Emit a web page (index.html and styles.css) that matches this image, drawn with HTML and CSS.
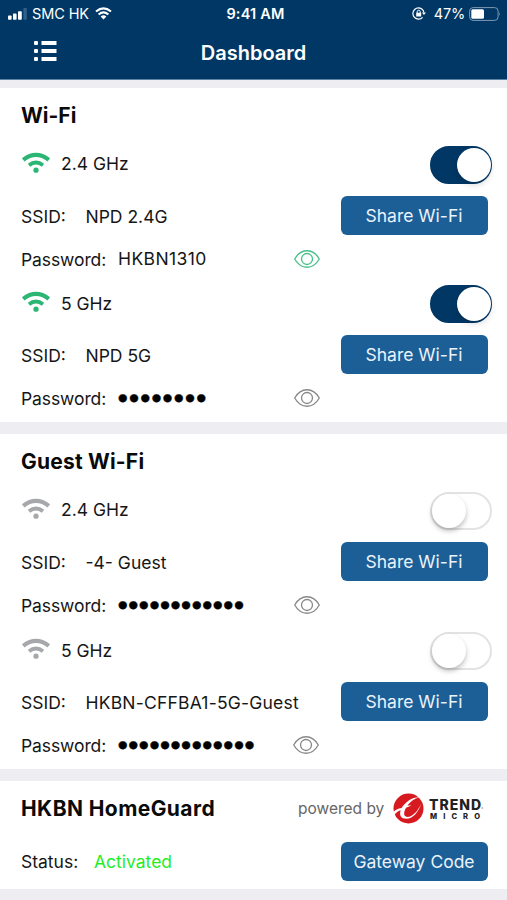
FILE: index.html
```html
<!DOCTYPE html>
<html lang="en">
<head>
<meta charset="utf-8">
<title>Dashboard</title>
<link rel="stylesheet" href="styles.css">
</head>
<body>
<svg class="defs" width="0" height="0" aria-hidden="true">
  <symbol id="wifi" viewBox="0 0 30 22">
    <path d="M2.2 7.8Q15 -2 27.8 7.8" fill="none" stroke="currentColor" stroke-width="4.2"/>
    <path d="M8 13.3Q15 7.6 22 13.3" fill="none" stroke="currentColor" stroke-width="3.8"/>
    <circle cx="15" cy="18.2" r="2.6" fill="currentColor"/>
  </symbol>
  <symbol id="eye" viewBox="0 0 26 18">
    <path d="M.7 9C7 -2 19 -2 25.3 9C19 20 7 20 .7 9Z" fill="none" stroke="currentColor" stroke-width="1.3"/>
    <circle cx="13" cy="9" r="5.5" fill="none" stroke="currentColor" stroke-width="1.3"/>
  </symbol>
</svg>

<header class="header">
  <div class="status">
    <div class="status-left">
      <svg class="signal" width="19" height="12" viewBox="0 0 19 12"><rect x="0" y="7.5" width="3.6" height="4.2" rx=".8" fill="#fff"/><rect x="5" y="5.6" width="3.6" height="6.1" rx=".8" fill="#fff"/><rect x="10" y="3.2" width="3.8" height="8.5" rx=".8" fill="#fff"/><rect x="15.4" y="0" width="3.4" height="11.7" rx=".8" fill="#33608a"/></svg>
      <span class="carrier">SMC HK</span>
      <svg class="status-wifi" width="17" height="13" viewBox="0 0 17 13"><path d="M1 4.6Q8.500 -1.800 16 4.600M3.600 7.500Q8.500 3.300 13.400 7.500" fill="none" stroke="#fff" stroke-width="2"/><path d="M5.600 9.400Q8.500 7.200 11.400 9.400L8.500 12.500Z" fill="#fff"/></svg>
    </div>
    <span class="clock">9:41 AM</span>
    <div class="status-right">
      <svg width="14" height="13" viewBox="0 0 14 13"><path d="M10.600 2.700A5.600 5.600 0 1 0 10.600 10.300M10.600 2.700A5.600 5.600 0 0 1 11.800 5.500" fill="none" stroke="#fff" stroke-width="1.200"/><path d="M9.900 5.400H14L11.900 8Z" fill="#fff"/><rect x="4.200" y="5.700" width="5" height="3.800" fill="#fff"/><path d="M5.200 6V4.700a1.500 1.500 0 0 1 3 0V6" fill="none" stroke="#fff"/></svg>
      <span class="percent">47%</span>
      <svg width="32" height="14" viewBox="0 0 32 14"><rect x=".6" y=".6" width="28.500" height="12.800" rx="3.500" fill="none" stroke="#7f9ab3"/><rect x="2.300" y="2.300" width="12.700" height="9.400" rx="1.500" fill="#fff"/><path d="M30.300 4.800q1.400 2.200 0 4.400Z" fill="#7f9ab3"/></svg>
    </div>
  </div>
  <div class="navbar">
    <svg class="menu" width="23" height="20" viewBox="0 0 23 20" fill="#fff"><rect x="0" y="0" width="4" height="4" rx="1"/><rect x="0" y="8" width="4" height="4" rx="1"/><rect x="0" y="16" width="4" height="4" rx="1"/><rect x="7.500" y="0" width="15" height="4"/><rect x="7.500" y="8" width="15" height="4"/><rect x="7.500" y="16" width="15" height="4"/></svg>
    <h1 class="page-title">Dashboard</h1>
  </div>
</header>

<main class="content">
  <section class="card">
    <h2 class="card-title">Wi-Fi</h2>
    <div class="band">
      <div class="band-row"><svg class="wifi on"><use href="#wifi"/></svg><span class="freq freq-first">2.4 GHz</span><span class="toggle is-on"></span></div>
      <div class="ssid-row"><span class="label">SSID:</span><span class="value">NPD 2.4G</span><button class="button">Share Wi-Fi</button></div>
      <div class="pass-row"><span class="pass-label">Password:</span><span class="pass">HKBN1310</span><svg class="eye on"><use href="#eye"/></svg></div>
    </div>
    <div class="band">
      <div class="band-row"><svg class="wifi on"><use href="#wifi"/></svg><span class="freq">5 GHz</span><span class="toggle is-on"></span></div>
      <div class="ssid-row"><span class="label">SSID:</span><span class="value">NPD 5G</span><button class="button">Share Wi-Fi</button></div>
      <div class="pass-row"><span class="pass-label">Password:</span><span class="dots dots-wide">●●●●●●●●</span><svg class="eye"><use href="#eye"/></svg></div>
    </div>
  </section>

  <section class="card guest">
    <h2 class="card-title guest-title">Guest Wi-Fi</h2>
    <div class="band">
      <div class="band-row"><svg class="wifi"><use href="#wifi"/></svg><span class="freq freq-first">2.4 GHz</span><span class="toggle"></span></div>
      <div class="ssid-row"><span class="label">SSID:</span><span class="value">-4- Guest</span><button class="button">Share Wi-Fi</button></div>
      <div class="pass-row"><span class="pass-label">Password:</span><span class="dots">●●●●●●●●●●●●</span><svg class="eye"><use href="#eye"/></svg></div>
    </div>
    <div class="band">
      <div class="band-row"><svg class="wifi"><use href="#wifi"/></svg><span class="freq">5 GHz</span><span class="toggle"></span></div>
      <div class="ssid-row"><span class="label">SSID:</span><span class="value value-long">HKBN-CFFBA1-5G-Guest</span><button class="button">Share Wi-Fi</button></div>
      <div class="pass-row"><span class="pass-label">Password:</span><span class="dots">●●●●●●●●●●●●●</span><svg class="eye eye-last"><use href="#eye"/></svg></div>
    </div>
  </section>

  <section class="card guard">
    <div class="guard-head">
      <h2 class="guard-title">HKBN HomeGuard</h2>
      <span class="powered">powered by</span>
      <svg class="trend-mark" width="31" height="31" viewBox="0 0 31 31"><circle cx="15.500" cy="15.500" r="15" fill="#d71920"/><path d="M0 19.500C2 17 5 15.500 8.500 15C13 8.500 19 3.800 27 4.200C21 5.500 17 8.800 14.500 12.600L18.500 12.600L13 14.800C10.500 19.500 10.500 23 13.500 23.800C18 24.800 24.500 19.500 28.200 10.500C26 18.500 20 25.800 13.500 25.800C8 25.800 6 22.300 7.700 17.300C5 18 2.500 20 1 22.500Z" fill="#fff"/></svg>
      <svg class="trend" width="58" height="27" viewBox="0 0 58 27"><text class="trend-top" x="0" y="14.500" textLength="52" lengthAdjust="spacing">TREND</text><text class="trend-sub" x="1" y="23.500" textLength="50">MICRO</text><rect x="52.500" y="12.500" width="1.500" height="1" fill="#777"/></svg>
    </div>
    <div class="guard-row"><span class="status-label">Status:</span><span class="activated">Activated</span><button class="button gateway">Gateway Code</button></div>
  </section>
</main>
</body>
</html>
```
FILE: styles.css
```css
* { box-sizing: border-box; }
body {
  margin: 0;
  width: 507px;
  height: 900px;
  overflow: hidden;
  background: #eeeef2;
  color: #161616;
  font-family: Inter, "Liberation Sans", sans-serif;
  font-size: 17.5px;
  line-height: 22px;
  white-space: nowrap;
}
h1, h2 { margin: 0; }
svg { display: block; flex: none; }
.defs { position: absolute; }

.header { height: 80px; background: #003764; color: #fff; border-bottom: 1px solid #5c83a6; }
.status { display: grid; grid-template-columns: 1fr auto 1fr; align-items: center; height: 27px; padding: 0 6px 0 8px; font-size: 14.5px; line-height: 18px; }
.status-left, .status-right { display: flex; align-items: center; }
.status-right { justify-content: flex-end; }
.carrier { width: 58px; margin-left: 5px; letter-spacing: -.1px; }
.status-wifi { margin-left: 5px; }
.clock { padding-left: 2px; font-weight: 600; letter-spacing: .2px; }
.percent { margin: 0 4px 0 8px; letter-spacing: -.2px; }
.navbar { display: grid; grid-template-columns: 1fr auto 1fr; align-items: center; height: 50px; }
.menu { margin-left: 34px; margin-bottom: 2px; }
.page-title { padding-top: 1px; font-size: 20px; line-height: 24px; font-weight: 600; }

.content { display: flex; flex-direction: column; gap: 12px; padding-top: 8px; }
.card { height: 334px; padding: 0 19px 0 21px; background: #fff; }
.card-title { height: 56px; line-height: 56px; font-size: 21px; font-weight: 700; color: #0a0a0a; }
.guest-title { letter-spacing: .2px; }
.guest { height: 335px; }
.guest .band + .band { margin-top: 1px; }
.band-row { display: flex; align-items: center; height: 42px; margin-right: -4px; }
.wifi { width: 30px; height: 22px; color: #a6a8ab; margin-bottom: 4px; }
.wifi.on { color: #2bb673; }
.freq { margin-left: 10px; }
.freq-first { padding-bottom: 2px; }
.toggle { width: 62px; height: 38px; margin-left: auto; border: 2px solid #e3e3e3; border-radius: 19px; background: #fff; }
.toggle::before { content: ""; display: block; width: 34px; height: 34px; border-radius: 50%; background: #fff; box-shadow: 0 3px 5px rgba(0,0,0,.25); }
.toggle.is-on { border-color: #003764; background: #003764; }
.toggle.is-on::before { margin-left: 24.5px; box-shadow: 0 3px 6px rgba(0,0,0,.15); }
.ssid-row { display: flex; align-items: center; height: 39px; margin-top: 10px; }
.label { width: 64.5px; padding-top: 2px; }
.value { padding-top: 2px; }
.value-long { letter-spacing: .2px; }
.button { width: 147px; height: 39px; margin-left: auto; margin-right: .5px; padding: 0; border: 0; border-radius: 6px; background: #1c5f97; color: #eaf2fa; font: inherit; }
.pass-row { display: flex; align-items: center; height: 48px; }
.pass-label { width: 97px; padding-top: 1px; letter-spacing: -.1px; }
.pass { letter-spacing: .4px; }
.eye { width: 26px; height: 18px; margin-left: auto; margin-right: 168px; color: #888; }
.eye.on { color: #48c08a; }
.eye-last { margin-right: 169px; }
.dots { padding-bottom: 2px; font-family: "DejaVu Sans", sans-serif; font-size: 10.5px; color: #000; letter-spacing: 1.4px; -webkit-text-stroke: .4px #000; }
.dots-wide { letter-spacing: 2.05px; }

.guard { height: 108px; }
.guard-head { display: flex; align-items: center; height: 55px; }
.guard-title { width: 277px; font-size: 21px; font-weight: 700; letter-spacing: .42px; color: #0a0a0a; }
.powered { width: 95px; font-size: 15.5px; color: #666; }
.trend { margin-left: 5px; }
.trend-top { font-size: 14px; font-weight: 800; fill: #222; }
.trend-sub { font-size: 7.5px; font-weight: 800; fill: #222; }
.guard-row { display: flex; align-items: center; height: 51px; }
.status-label { width: 73px; }
.activated { color: #1fee1f; }
```
